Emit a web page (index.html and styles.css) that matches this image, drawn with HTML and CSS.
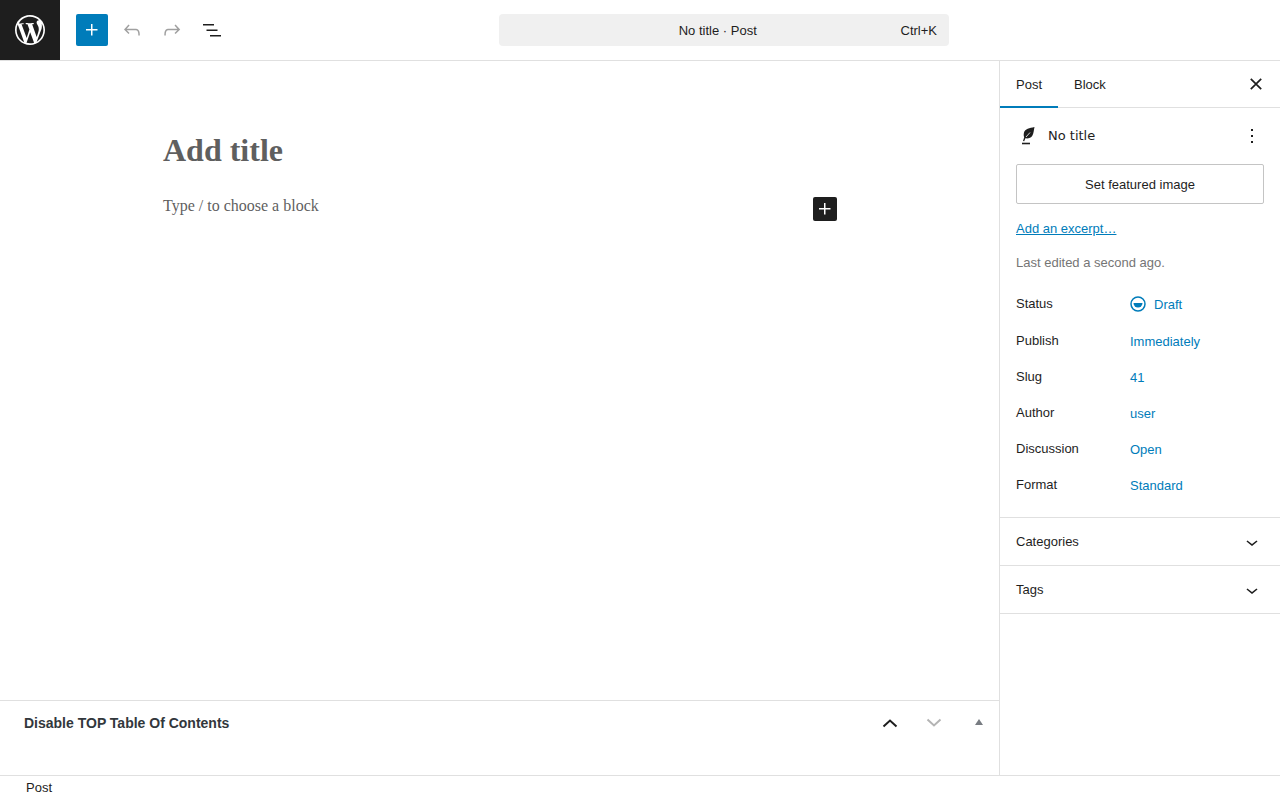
FILE: index.html
```html
<!DOCTYPE html>
<html lang="en">
<head>
<meta charset="utf-8">
<title>Edit Post</title>
<link rel="stylesheet" href="styles.css">
</head>
<body>
<div class="app">
  <header class="topbar">
    <a class="wp-logo" href="#" aria-label="WordPress">
      <svg width="30" height="30" viewBox="0 0 20 20" fill="#fff"><path d="M20 10c0-5.51-4.49-10-10-10C4.48 0 0 4.49 0 10c0 5.52 4.48 10 10 10 5.51 0 10-4.48 10-10zM7.78 15.37L4.37 6.22c.55-.02 1.17-.08 1.17-.08.5-.06.44-.67-.06-.65 0 0-1.45.12-2.37.12-.18 0-.37 0-.58-.01C4.12 2.69 6.87 1.11 10 1.11c2.33 0 4.45.87 6.05 2.34-.68-.11-1.65.39-1.65 1.58 0 .74.45 1.36.9 2.1.35.61.55 1.36.55 2.46 0 1.49-1.4 5-1.4 5l-3.03-8.37c.54-.02.82-.08.82-.08.5-.06.44-.8-.06-.77 0 0-1.44.12-2.38.12-.87 0-2.33-.12-2.33-.12-.5-.03-.56.74-.06.77l.92.08 1.26 3.41zM17.41 10c.24-.64.74-1.87.43-4.25.7 1.29 1.05 2.71 1.05 4.25 0 3.29-1.73 6.24-4.4 7.78.97-2.59 1.94-5.2 2.92-7.78zM6.1 18.09C3.12 16.65 1.11 13.53 1.11 10c0-1.3.23-2.48.72-3.59C3.25 10.3 4.67 14.2 6.1 18.09zm4.03-6.63l2.58 6.98c-.86.29-1.76.45-2.71.45-.79 0-1.57-.11-2.29-.33.81-2.38 1.62-4.74 2.42-7.1z"/></svg>
    </a>
    <div class="tools">
      <button class="tool tool-add" aria-label="Add block"><svg width="24" height="24" viewBox="0 0 24 24" fill="#fff"><path d="M11 12.5V17.5H12.5V12.5H17.5V11H12.5V6H11V11H6V12.5H11Z"/></svg></button>
      <button class="tool" aria-label="Undo"><svg width="24" height="24" viewBox="0 0 24 24" fill="#a0a0a0"><path d="M18.3 11.7c-.6-.6-1.4-.9-2.3-.9H6.7l2.9-3.3-1.1-1-4.5 5L8.5 16l1-1-2.7-2.7H16c.5 0 .9.2 1.3.5 1 1 1 3.4 1 4.5v.3h1.500v-.2c0-1.500 0-4.300-1.500-5.700z"/></svg></button>
      <button class="tool" aria-label="Redo"><svg width="24" height="24" viewBox="0 0 24 24" fill="#a0a0a0"><path d="M15.6 6.500l-1.100 1 2.900 3.300H8c-.9 0-1.700.3-2.300.9-1.400 1.500-1.400 4.200-1.400 5.700v.2h1.500v-.3c0-1.100 0-3.500 1-4.500.3-.3.7-.5 1.300-.5h9.200L14.500 15l1.100 1.100 4.600-4.600-4.600-5z"/></svg></button>
      <button class="tool" aria-label="Document overview"><svg width="24" height="24" viewBox="0 0 24 24" fill="#1e1e1e"><path d="M3 6h11v1.500H3V6zm3.500 5.500h11V13h-11v-1.500zM21 17H10v1.500h11V17z"/></svg></button>
    </div>
    <div class="command">
      <span class="command-title">No title · Post</span>
      <span class="command-key">Ctrl+K</span>
    </div>
  </header>
  <div class="body-row">
    <main class="editor">
      <div class="canvas">
        <div class="column">
          <h1 class="post-title">Add title</h1>
          <div class="appender">
            <p class="placeholder">Type / to choose a block</p>
            <button class="inline-add" aria-label="Add block"><svg width="24" height="24" viewBox="0 0 24 24" fill="#fff"><path d="M11 12.5V17.5H12.5V12.5H17.5V11H12.5V6H11V11H6V12.5H11Z"/></svg></button>
          </div>
        </div>
      </div>
      <section class="metabox">
        <h2 class="metabox-title">Disable TOP Table Of Contents</h2>
        <div class="metabox-controls">
          <svg width="24" height="24" viewBox="0 0 24 24" fill="none" stroke="#1e1e1e" stroke-width="2"><path d="M5.500 15.500L12 9.500l6.500 6"/></svg>
          <svg width="24" height="24" viewBox="0 0 24 24" fill="none" stroke="#b4b4b4" stroke-width="2"><path d="M5.500 8.500L12 14.500l6.500-6"/></svg>
          <span class="mb-caret"></span>
        </div>
      </section>
    </main>
    <aside class="sidebar">
      <div class="tabs">
        <button class="tab tab-active">Post</button>
        <button class="tab">Block</button>
        <button class="close" aria-label="Close settings"><svg width="24" height="24" viewBox="0 0 24 24" fill="none" stroke="#1e1e1e" stroke-width="1.700"><path d="M6.800 6.800l10.400 10.400M17.200 6.800L6.800 17.200"/></svg></button>
      </div>
      <div class="panel">
        <div class="card-head">
          <svg class="card-icon" width="24" height="24" viewBox="0 0 24 24"><path fill="#1e1e1e" d="M18.500 3C13.500 4 9 5 8 8.500c-.5 2-.3 3.500.2 4.700L7 17l1.200.3 1.200-3c2.600.5 5.600-.3 6.900-2.500C17.800 9 17.800 6 18.500 3z"/><path fill="none" stroke="#fff" stroke-width=".8" d="M10 13l4-4.500"/><path fill="#1e1e1e" d="M6 18.700h8v1.600H6z"/></svg>
          <span class="card-title">No title</span>
          <svg width="24" height="24" viewBox="0 0 24 24" fill="#1e1e1e"><path d="M13 19h-2v-2h2v2zm0-6h-2v-2h2v2zm0-6h-2V5h2v2z"/></svg>
        </div>
        <button class="featured">Set featured image</button>
        <a class="excerpt" href="#">Add an excerpt…</a>
        <p class="edited">Last edited a second ago.</p>
        <dl class="fields">
          <div class="field field-status"><dt>Status</dt><dd><svg class="draft-icon" width="16" height="16" viewBox="0 0 16 16"><circle cx="8" cy="8" r="7" fill="none" stroke="#007cba" stroke-width="1.500"/><path fill="#007cba" d="M3.500 7h9a4.500 4.500 0 0 1-9 0z"/></svg><a href="#">Draft</a></dd></div>
          <div class="field"><dt>Publish</dt><dd><a href="#">Immediately</a></dd></div>
          <div class="field"><dt>Slug</dt><dd><a href="#">41</a></dd></div>
          <div class="field"><dt>Author</dt><dd><a href="#">user</a></dd></div>
          <div class="field"><dt>Discussion</dt><dd><a href="#">Open</a></dd></div>
          <div class="field"><dt>Format</dt><dd><a href="#">Standard</a></dd></div>
        </dl>
      </div>
      <div class="accordion"><span>Categories</span><svg width="24" height="24" viewBox="0 0 24 24" fill="#1e1e1e"><path d="M17.500 11.600L12 16l-5.500-4.400.9-1.200L12 14l4.500-3.600 1 1.200z"/></svg></div>
      <div class="accordion"><span>Tags</span><svg width="24" height="24" viewBox="0 0 24 24" fill="#1e1e1e"><path d="M17.500 11.600L12 16l-5.500-4.400.9-1.200L12 14l4.500-3.600 1 1.200z"/></svg></div>
    </aside>
  </div>
  <footer class="statusbar">Post</footer>
</div>
</body>
</html>
```
FILE: styles.css
```css
* { box-sizing: border-box; }
html, body { margin: 0; height: 100%; overflow: hidden; }
body { font-family: "Liberation Sans", Arial, sans-serif; font-size: 13px; color: #1e1e1e; background: #fff; }
button { font: inherit; color: inherit; background: none; border: 0; padding: 0; }
svg { display: block; flex: none; }

.app { height: 800px; display: flex; flex-direction: column; }

.topbar { height: 61px; flex: none; display: flex; align-items: flex-start; border-bottom: 1px solid #e0e0e0; position: relative; }
.wp-logo { width: 60px; height: 60px; background: #1e1e1e; display: flex; align-items: center; justify-content: center; }
.tools { display: flex; gap: 8px; padding: 14px 0 0 16px; }
.tool { width: 32px; height: 32px; display: flex; align-items: center; justify-content: center; border-radius: 2px; }
.tool-add { background: #007cba; }
.command { position: absolute; left: 499px; top: 14px; width: 450px; height: 32px; background: #f0f0f0; border-radius: 4px; display: flex; align-items: center; padding: 0 12px; }
.command-title { flex: 1; text-align: center; padding-left: 24px; }

.body-row { flex: 1; display: flex; min-height: 0; }
.editor { flex: 1; display: flex; flex-direction: column; border-right: 1px solid #e0e0e0; min-width: 0; }
.canvas { flex: 1; min-height: 0; }
.column { width: 674px; margin-left: 163px; padding-top: 69px; }
.post-title { margin: 0; font: bold 32px/40px "Liberation Serif", "Times New Roman", serif; color: #5f5f5f; height: 40px; }
.appender { display: flex; align-items: flex-start; justify-content: space-between; margin-top: 24px; }
.placeholder { margin: 0; font: 16px/24px "Liberation Serif", "Times New Roman", serif; color: #5f5f5f; }
.inline-add { width: 24px; height: 24px; background: #1e1e1e; border-radius: 2px; margin-top: 3px; }

.metabox { height: 75px; flex: none; border-top: 1px solid #e0e0e0; display: flex; align-items: flex-start; justify-content: space-between; }
.metabox-title { margin: 0; padding: 14px 0 0 24px; font-size: 14px; line-height: 16px; font-weight: 700; color: #32373c; }
.metabox-controls { display: flex; align-items: center; gap: 20px; padding: 10px 16px 0 0; }
.mb-caret { width: 0; height: 0; margin-left: 9px; margin-top: -3px; border-left: 4.500px solid transparent; border-right: 4.500px solid transparent; border-bottom: 6px solid #787c82; }

.sidebar { width: 280px; flex: none; }
.tabs { height: 47px; display: flex; align-items: stretch; border-bottom: 1px solid #e0e0e0; position: relative; }
.tab { padding: 0 16px; height: 47px; line-height: 47px; }
.tab-active { box-shadow: inset 0 -2px 0 #007cba; }
.close { margin-left: auto; width: 48px; display: flex; align-items: center; justify-content: center; }

.panel { padding: 16px; border-bottom: 1px solid #e0e0e0; height: 410px; }
.card-head { display: flex; align-items: center; height: 24px; margin-bottom: 16px; }
.card-icon { margin-right: 8px; }
.card-title { flex: 1; font-family: "DejaVu Sans", sans-serif; font-size: 13px; padding-bottom: 2px; }
.featured { width: 100%; height: 40px; border: 1px solid #c4c4c4; border-radius: 2px; display: block; }
.excerpt { display: block; margin-top: 16px; line-height: 18px; color: #007cba; }
.edited { margin: 16px 0 0; line-height: 18px; color: #757575; }
.fields { margin: 14px 0 0; }
.field { display: flex; height: 36px; align-items: flex-start; }
.field-status { height: 37px; }
.field dt { width: 114px; line-height: 18px; padding-top: 9px; }
.field dd { margin: 0; display: flex; align-items: center; line-height: 18px; padding-top: 10px; }
.field a { color: #007cba; text-decoration: none; }
.draft-icon { margin: 0 8px 2px 0; }

.accordion { height: 48px; display: flex; align-items: center; justify-content: space-between; padding: 0 16px; border-bottom: 1px solid #e0e0e0; }

.statusbar { height: 25px; flex: none; border-top: 1px solid #e0e0e0; padding-left: 26px; line-height: 23px; }
```
